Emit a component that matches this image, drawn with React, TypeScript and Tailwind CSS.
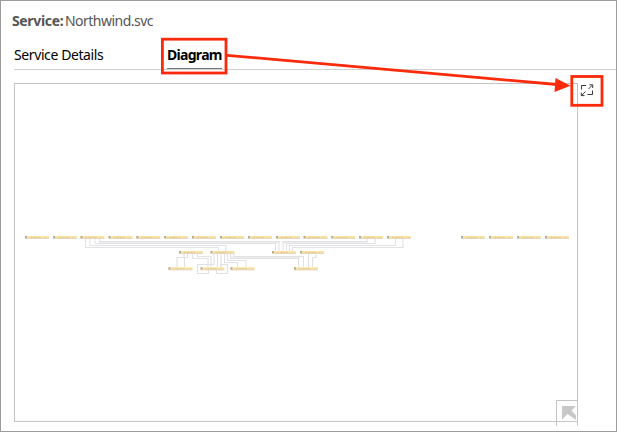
const topRow = [25, 53, 80.5, 108.5, 136.3, 164.2, 192, 220, 248, 276, 303.5, 331.3, 359, 387, 461, 489, 517, 545];

const entities: [number, number][] = [
  ...topRow.map((x): [number, number] => [x, 236]),
  [179, 251], [210.5, 251], [272, 251], [300, 251],
  [168.5, 267.3], [200.5, 267.3], [230.5, 267.3], [294, 267.3],
];

const links = [
  'M85.5 239V247.5H218.5V251',
  'M90 239V245.5H226V251',
  'M95 239V243.5H275.5V251',
  'M99.5 239V241.5H279V251',
  'M283 251V241.5H367V239',
  'M286.5 251V243.5H375V239',
  'M289.5 251V245.5H395.5V239',
  'M292.5 251V247.5H403V239',
  'M184 254V257.5H177V267',
  'M187.5 254V257.5H184.5V267',
  'M192.5 254V258.5H208V267',
  'M197.5 254V256.5H211V267',
  'M214 254V264.5H197.5V273.5H208.5V270',
  'M217.5 254V267',
  'M221 254V267',
  'M224.5 254V262.5H237.5V267',
  'M227.5 254V260.5H246V267',
  'M230.5 254V258.5H298.5V267',
  'M234 254V256.5H303.5V267',
  'M308.5 254V267',
  'M316 254V257.5H312.5V267',
  'M216.5 270V273.5H227.5V264.5H221V267',
];

function Entity({ x, y }: { x: number; y: number }) {
  return (
    <g transform={`translate(${x} ${y})`}>
      <rect width="24" height="2.6" fill="#fde3a6" />
      <rect y="2.2" width="24" height=".8" fill="#dcd2b8" />
      <rect width="2" height="2.2" fill="#b0ada0" />
      <path d="M5 1.4H16" stroke="#dcc08e" strokeWidth=".8" strokeDasharray="2 .8 3 .6" />
      <path d="M19 1.4H23" stroke="#ead096" strokeWidth=".7" strokeDasharray="1 1" />
    </g>
  );
}

function Diagram() {
  return (
    <svg className="block h-[337px] w-[562px]" viewBox="15 84 562 337">
      <path d="M99 242.5H279M283 242.5H368M231 257.5H300" stroke="#eeeeef" strokeWidth="2" />
      <g fill="none" stroke="#e1e1e3" strokeWidth="1.1">
        {links.map((d) => <path key={d} d={d} />)}
      </g>
      {entities.map(([x, y]) => <Entity key={`${x}-${y}`} x={x} y={y} />)}
    </svg>
  );
}

export default function App() {
  return (
    <main className="relative h-[432px] w-[617px] overflow-hidden border border-[#9c9c9c] bg-white font-['Noto_Sans',sans-serif] text-sm text-black">
      <header className="flex h-10 items-center pl-[11px] text-[14px] text-[#555]">
        <h1 className="flex whitespace-nowrap leading-5"><b className="w-[53px] tracking-[-0.35px]">Service:</b><span className="tracking-[-0.52px]">Northwind.svc</span></h1>
      </header>
      <nav className="ml-[13px] flex h-[29px] border-b border-[#d0d0d0]">
        <button className="w-[153px] whitespace-nowrap text-left tracking-[-0.4px]">Service Details</button>
        <button className="h-[28px] w-[55px] whitespace-nowrap border-b border-[#777] text-left font-bold tracking-[-0.7px]">Diagram</button>
      </nav>
      <div className="mt-[13px] flex pl-[13px]">
        <section className="h-[339px] w-[564px] border border-[#c4c4c4]">
          <Diagram />
        </section>
        <button className="ml-[2px] h-4 w-4" aria-label="Expand diagram">
          <svg className="block h-4 w-4" viewBox="0 0 16 16" fill="none" stroke="#383838" strokeWidth="1">
            <path d="M6 2.5H1.5V6.5M12.5 7.5V11.5H7.5" />
            <path d="M8.5 6L12.5 2M9.5 1.8H12.7V5M5.5 8.5L1.5 12.5M1.3 9.5V12.6H4.5" />
          </svg>
        </button>
      </div>
      <svg className="absolute left-[555px] top-[399px] h-[26px] w-[23px]" viewBox="0 0 23 26">
        <path d="M.5 26V.5H21.5V26" fill="none" stroke="#c4c4c4" />
        <path d="M6 6H20L15.5 10.5L20 15.5V20L11.5 14L6 19.5Z" fill="#c8c8c8" />
      </svg>
      <svg className="pointer-events-none absolute -left-px -top-px h-[432px] w-[617px]" viewBox="0 0 617 432" fill="none" stroke="#fa2a0a">
        <rect x="162.4" y="39.2" width="63.6" height="33.8" strokeWidth="2.8" />
        <path d="M227 55.3L557 84.5" strokeWidth="2.8" />
        <path d="M555.5 78L570.5 85.7L554.5 92Z" fill="#fa2a0a" stroke="none" />
        <rect x="571.8" y="76.5" width="30.2" height="28.8" strokeWidth="2.8" />
      </svg>
    </main>
  );
}
